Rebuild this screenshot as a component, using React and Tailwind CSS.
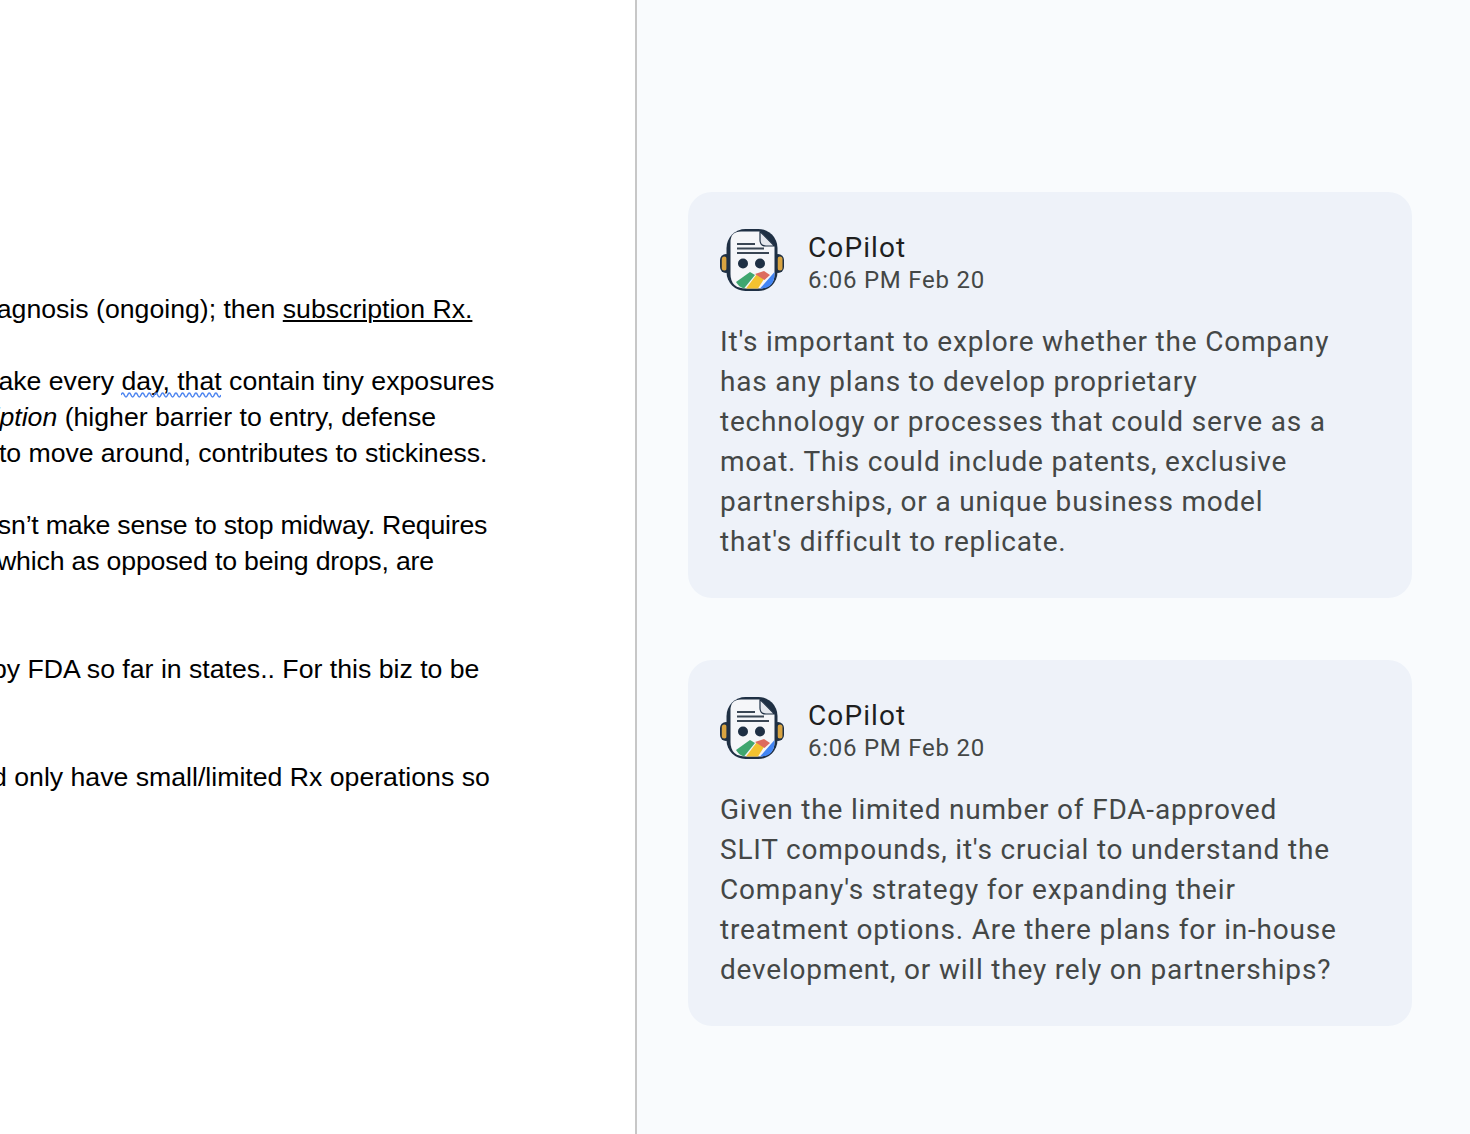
import React from "react";

const cards = [
  {
    id: 1,
    lines: [
      "It's important to explore whether the Company",
      "has any plans to develop proprietary",
      "technology or processes that could serve as a",
      "moat. This could include patents, exclusive",
      "partnerships, or a unique business model",
      "that's difficult to replicate.",
    ],
  },
  {
    id: 2,
    lines: [
      "Given the limited number of FDA-approved",
      "SLIT compounds, it's crucial to understand the",
      "Company's strategy for expanding their",
      "treatment options. Are there plans for in-house",
      "development, or will they rely on partnerships?",
    ],
  },
];

function CoPilotIcon() {
  return (
    <svg width="64" height="64" viewBox="0 0 64 64" className="shrink-0">
      <rect x="0" y="26" width="12" height="19" rx="6" fill="#1f3044" />
      <rect x="52" y="26" width="12" height="19" rx="6" fill="#1f3044" />
      <rect x="1.8" y="28.5" width="5" height="14" rx="2.5" fill="#d9a441" />
      <rect x="57.5" y="28.5" width="5" height="14" rx="2.5" fill="#d9a441" />
      <rect x="6.5" y="1" width="51" height="62" rx="19" fill="#1f3044" />
      <path d="M10.5 14 Q10.5 3.5 21 3.5 L40 3.5 L54.5 18 L54.5 46 Q54.5 60.5 38 60.5 L26 60.5 Q10.5 60.5 10.5 46 Z" fill="#f5f6f9" />
      <path d="M40 3.5 L54.5 18 L46 18 Q40 18 40 12 Z" fill="#e4e7ed" stroke="#1f3044" strokeWidth="1.2" strokeLinejoin="round" />
      <rect x="17" y="15" width="18" height="2" fill="#3a4654" />
      <rect x="17" y="19.5" width="27" height="2" fill="#3a4654" />
      <rect x="17" y="24" width="32" height="2" fill="#3a4654" />
      <circle cx="23" cy="35.5" r="5" fill="#1f3044" />
      <circle cx="40" cy="35.5" r="5" fill="#1f3044" />
      <path d="M16 54 L30 44 L35 47 L24 60.5 Q19 59 16 54 Z" fill="#3fa66f" />
      <path d="M26 60.5 L37 46 L44 51 L38 60.5 Z" fill="#f2c230" />
      <path d="M35 46 L44 43 L50 47 L44.5 52 Z" fill="#dd6b5e" />
      <path d="M40 60.5 L54.5 44 L54.5 46 Q54.5 60.5 40 60.5 Z" fill="#4285f4" />
    </svg>
  );
}

function Card({ lines }) {
  return (
    <div className="bg-[#eef2f9] rounded-[24px] pt-9 pb-9 px-8">
      <div className="flex items-start gap-6">
        <CoPilotIcon />
        <div className="pt-[2px]">
          <div className="text-[28px] leading-9 text-[#1f1f1f] tracking-[1.1px]">CoPilot</div>
          <div className="text-[24px] leading-7 text-[#444746] tracking-[0.75px]">6:06 PM Feb 20</div>
        </div>
      </div>
      <div className="mt-[28px] text-[28px] leading-10 text-[#444746] tracking-[0.8px]">
        {lines.map((line) => (
          <div key={line} className="whitespace-nowrap">{line}</div>
        ))}
      </div>
    </div>
  );
}

// spell check squiggle, finer than the browser's wavy underline
function Squiggle() {
  const wave = "M0 3" + " q1.67 -4 3.33 0 t3.33 0".repeat(15);
  return (
    <svg width="100" height="6" viewBox="0 0 100 6" className="absolute left-0 top-[26px]">
      <path d={wave} fill="none" stroke="#4f86f0" strokeWidth="1.5" />
    </svg>
  );
}

export default function App() {
  return (
    <div className="flex h-[1134px] w-[1470px] overflow-hidden bg-white font-['Roboto',sans-serif]">
      <div className="w-[635px] shrink-0 overflow-hidden pt-[291px] font-['Liberation_Sans',sans-serif] text-[26.67px] leading-9 text-black">
        <div className="whitespace-nowrap -ml-[24px]">diagnosis (ongoing); then <span className="underline decoration-2 underline-offset-2">subscription Rx.</span></div>
        <div className="h-9" />
        <div className="whitespace-nowrap -ml-[9px]">take every <span className="relative">day, that<Squiggle /></span> contain tiny exposures</div>
        <div className="whitespace-nowrap -ml-[85px]"><em>subscription</em> (higher barrier to entry, defense</div>
        <div className="whitespace-nowrap -ml-px tracking-[-0.05px]">to move around, contributes to stickiness.</div>
        <div className="h-9" />
        <div className="whitespace-nowrap -ml-[46px] tracking-[-0.2px]">doesn’t make sense to stop midway. Requires</div>
        <div className="whitespace-nowrap -ml-[3px] tracking-[-0.17px]">which as opposed to being drops, are</div>
        <div className="h-[72px]" />
        <div className="whitespace-nowrap -ml-[8px]">by FDA so far in states.. For this biz to be</div>
        <div className="h-[72px]" />
        <div className="whitespace-nowrap -ml-[8px]">d only have small/limited Rx operations so</div>
      </div>
      <div className="flex-1 border-l-2 border-[#c7c7c7] bg-[#f9fbfd] pt-[192px] pl-[51px] pr-[58px]">
        <div className="flex flex-col gap-[62px]">
          {cards.map((card) => (
            <Card key={card.id} lines={card.lines} />
          ))}
        </div>
      </div>
    </div>
  );
}
